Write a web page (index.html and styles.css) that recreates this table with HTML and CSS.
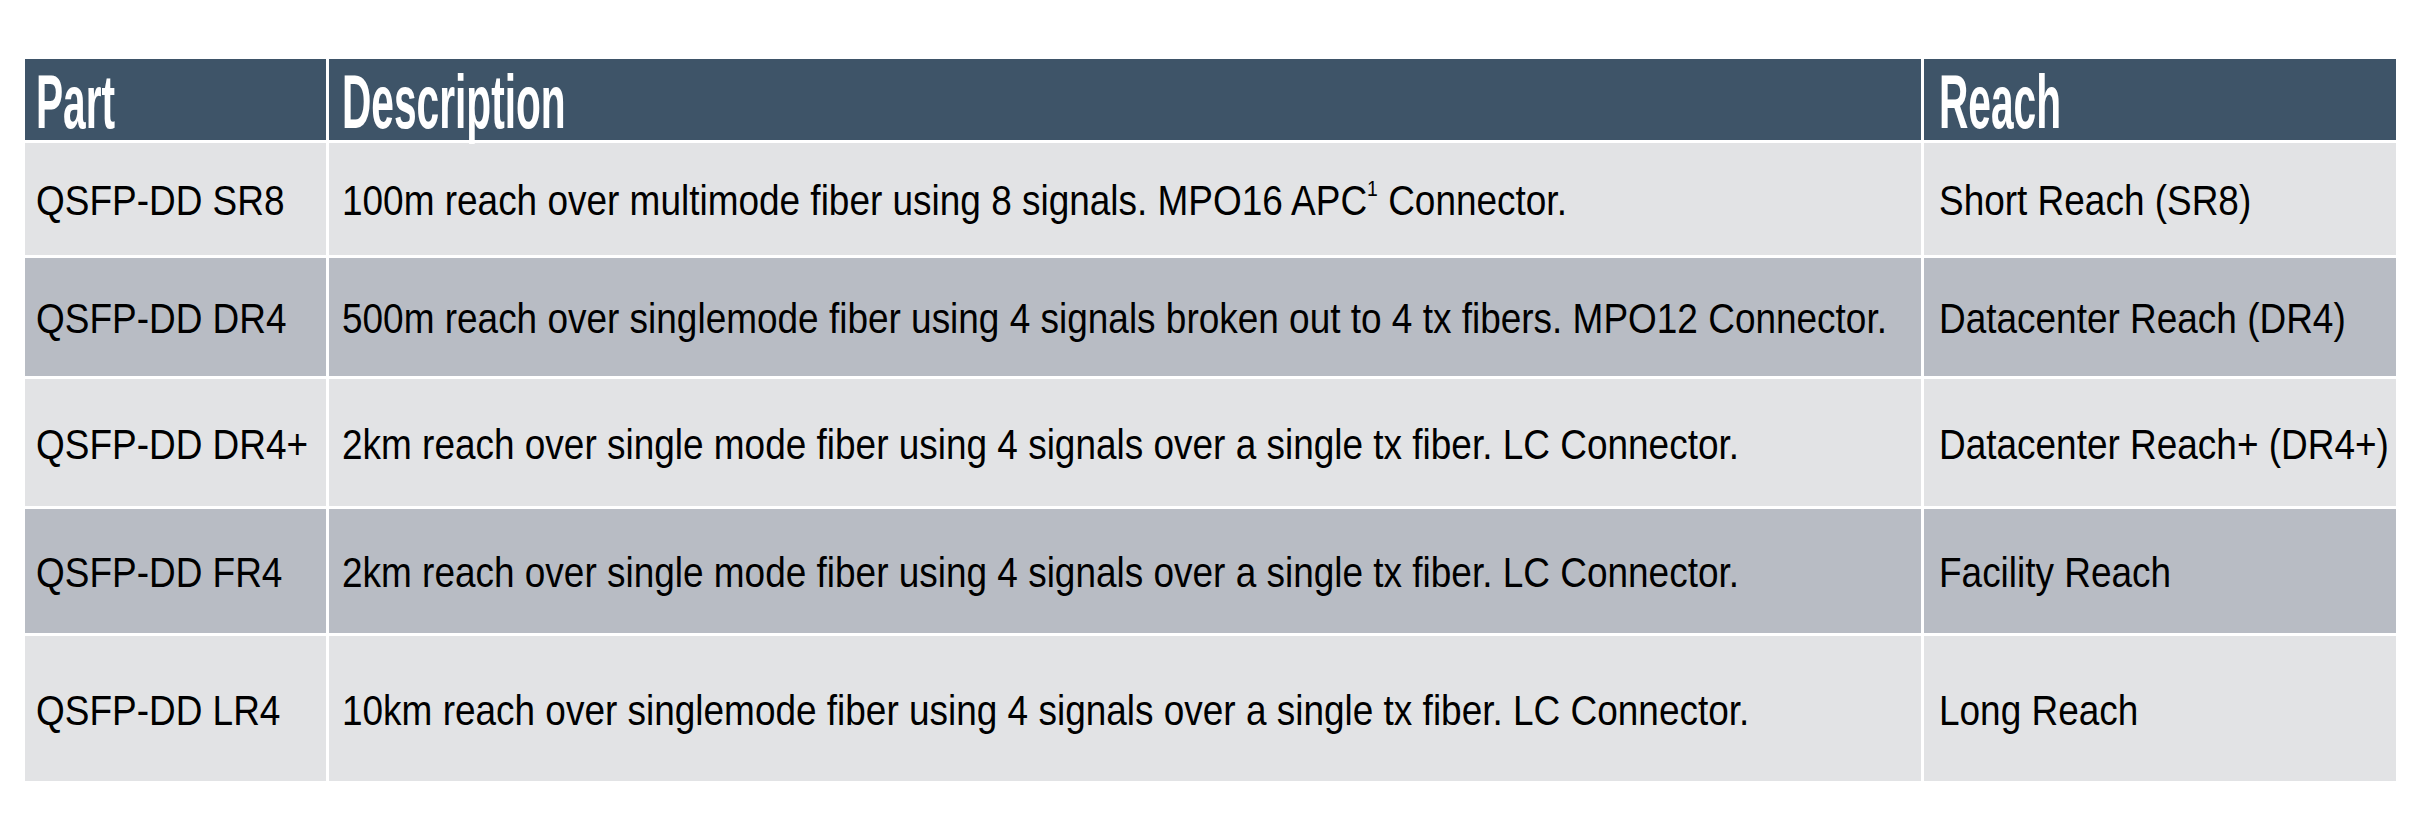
FILE: index.html
```html
<!DOCTYPE html>
<html lang="en">
<head>
<meta charset="utf-8">
<title>QSFP-DD Optics</title>
<link rel="stylesheet" href="styles.css">
</head>
<body>
<div class="page">
  <div class="grid">
    <div class="cell head c1"><span class="ht">Part</span></div>
    <div class="cell head c2"><span class="ht">Description</span></div>
    <div class="cell head c3"><span class="ht">Reach</span></div>

    <div class="cell light c1"><span class="t">QSFP-DD SR8</span></div>
    <div class="cell light c2"><span class="t">100m reach over multimode fiber using 8 signals. MPO16 APC<sup class="sup">1</sup> Connector.</span></div>
    <div class="cell light c3"><span class="t">Short Reach (SR8)</span></div>

    <div class="cell dark c1"><span class="t">QSFP-DD DR4</span></div>
    <div class="cell dark c2"><span class="t">500m reach over singlemode fiber using 4 signals broken out to 4 tx fibers. MPO12 Connector.</span></div>
    <div class="cell dark c3"><span class="t">Datacenter Reach (DR4)</span></div>

    <div class="cell light c1"><span class="t">QSFP-DD DR4+</span></div>
    <div class="cell light c2"><span class="t">2km reach over single mode fiber using 4 signals over a single tx fiber. LC Connector.</span></div>
    <div class="cell light c3"><span class="t">Datacenter Reach+ (DR4+)</span></div>

    <div class="cell dark c1"><span class="t">QSFP-DD FR4</span></div>
    <div class="cell dark c2"><span class="t">2km reach over single mode fiber using 4 signals over a single tx fiber. LC Connector.</span></div>
    <div class="cell dark c3"><span class="t">Facility Reach</span></div>

    <div class="cell light c1"><span class="t">QSFP-DD LR4</span></div>
    <div class="cell light c2"><span class="t">10km reach over singlemode fiber using 4 signals over a single tx fiber. LC Connector.</span></div>
    <div class="cell light c3"><span class="t">Long Reach</span></div>
  </div>
</div>
</body>
</html>
```
FILE: styles.css
```css
html, body {
  margin: 0;
  padding: 0;
  background: #ffffff;
}

.page {
  padding: 59px 0 0 25px;
  font-family: "Liberation Sans", Arial, sans-serif;
  color: #000000;
}

.grid {
  display: grid;
  grid-template-columns: 301px 1592px 472px;
  grid-template-rows: 81px 112px 118px 127px 124px 145px;
  gap: 3px;
}

.cell {
  display: flex;
  align-items: center;
  white-space: nowrap;
}

.c1 { padding-left: 11px; }
.c2 { padding-left: 13px; }
.c3 { padding-left: 15px; }

.head {
  background: #3e5468;
  color: #ffffff;
}

.light { background: #e2e3e5; }
.dark { background: #b8bcc4; }

.ht {
  display: inline-block;
  font-weight: bold;
  font-size: 76px;
  line-height: 76px;
  transform: scaleX(0.535);
  transform-origin: left center;
  margin-top: 4px;
}

.t {
  display: inline-block;
  font-size: 42px;
  line-height: 1;
  transform: scaleX(0.88);
  transform-origin: left center;
  margin-top: 4px;
}

.sup {
  font-size: 22px;
  vertical-align: top;
  position: relative;
  top: -2px;
}
```
